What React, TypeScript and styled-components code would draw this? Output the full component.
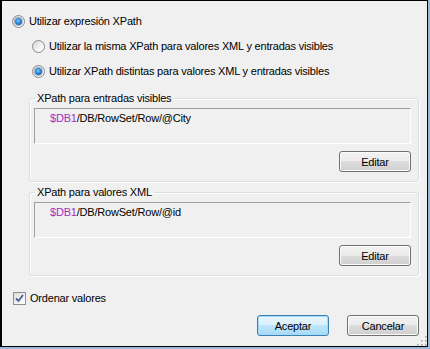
import styled, { createGlobalStyle } from "styled-components";

const Global = createGlobalStyle`
  body {
    margin: 0;
    background: #ffffff;
  }
`;

const Frame = styled.div`
  width: 430px;
  height: 349px;
  box-sizing: border-box;
  border-right: 2px solid #9db9dc;
  border-bottom: 2px solid #9db9dc;
  font-family: "Liberation Sans", Arial, sans-serif;
  font-size: 11px;
  letter-spacing: -0.2px;
  color: #000;
`;

const Dialog = styled.div`
  position: relative;
  height: 100%;
  box-sizing: border-box;
  border: 1px solid #000;
  border-left-width: 2px;
  background: #f0f0f0;
  padding: 12px 8px 0 10px;
  display: flex;
  flex-direction: column;
`;

const Row = styled.label<{ gap?: number }>`
  display: flex;
  align-items: center;
  height: 16px;
  gap: ${(p) => p.gap ?? 4}px;
  white-space: nowrap;
`;

const SubOptions = styled.div`
  display: flex;
  flex-direction: column;
  gap: 9px;
  margin: 9px 0 0 20px;
`;

const RadioRing = styled.span`
  width: 13px;
  height: 13px;
  box-sizing: border-box;
  border-radius: 50%;
  border: 1px solid #8a8a8a;
  background: linear-gradient(135deg, #d6d6d6 0%, #f4f4f4 60%, #ffffff 100%);
  display: flex;
  align-items: center;
  justify-content: center;
  flex-shrink: 0;
`;

const RadioDot = styled.span`
  width: 7px;
  height: 7px;
  border-radius: 50%;
  background: radial-gradient(circle at 45% 40%, #7fd0ff 0%, #2a86d6 45%, #0d3f7c 100%);
  box-shadow: 0 0 0 1px rgba(20, 60, 120, 0.35);
`;

function Radio({ checked }: { checked?: boolean }) {
  return <RadioRing>{checked && <RadioDot />}</RadioRing>;
}

const Group = styled.fieldset<{ top: number }>`
  margin: ${(p) => p.top}px 0 0 17px;
  padding: 3px 7px 9px 4px;
  border: 1px solid #d5dfe5;
  border-radius: 3px;
  box-shadow: inset 1px 1px 0 #ffffff, 1px 1px 0 #ffffff;
  display: flex;
  flex-direction: column;
  align-items: flex-end;
  min-width: 0;
`;

const Legend = styled.legend`
  padding: 0 2px;
  margin-left: 1px;
  line-height: 14px;
`;

const PathBox = styled.div`
  align-self: stretch;
  height: 36px;
  box-sizing: border-box;
  border-top: 1px solid #a0a0a0;
  border-left: 1px solid #a0a0a0;
  border-right: 1px solid #ffffff;
  border-bottom: 1px solid #ffffff;
  padding: 2px 0 0 15px;
  line-height: 14px;
`;

const Var = styled.span`
  color: #a32fc0;
`;

const Button = styled.button<{ primary?: boolean }>`
  width: 72px;
  height: 21px;
  box-sizing: border-box;
  padding: 0;
  font: inherit;
  letter-spacing: inherit;
  color: #000;
  border-radius: 3px;
  border: 1px solid ${(p) => (p.primary ? "#3c7fb1" : "#707070")};
  background: ${(p) =>
    p.primary
      ? "linear-gradient(#eaf6fd 0%, #d9f0fc 50%, #bee6fd 50%, #a7d9f5 100%)"
      : "linear-gradient(#f2f2f2 0%, #ebebeb 50%, #dddddd 50%, #cfcfcf 100%)"};
  box-shadow: inset 0 0 0 1px ${(p) => (p.primary ? "#9fdcf9" : "#fcfcfc")};
`;

const EditButton = styled(Button)`
  margin-top: 7px;
`;

const CheckBox = styled.span`
  width: 13px;
  height: 13px;
  box-sizing: border-box;
  border: 1px solid #8e8f8f;
  background: linear-gradient(135deg, #dcdcdc 0%, #f6f6f6 70%, #ffffff 100%);
  margin-left: 1px;
  display: flex;
  align-items: center;
  justify-content: center;
  flex-shrink: 0;
`;

const Footer = styled.div`
  display: flex;
  justify-content: flex-end;
  gap: 18px;
  margin-top: 9px;
`;

const Grip = styled.svg`
  position: absolute;
  right: 0;
  bottom: 0;
`;

export default function App() {
  return (
    <Frame>
      <Global />
      <Dialog>
        <Row>
          <Radio checked />
          Utilizar expresión XPath
        </Row>
        <SubOptions>
          <Row>
            <Radio />
            Utilizar la misma XPath para valores XML y entradas visibles
          </Row>
          <Row>
            <Radio checked />
            Utilizar XPath distintas para valores XML y entradas visibles
          </Row>
        </SubOptions>
        <Group top={12}>
          <Legend>XPath para entradas visibles</Legend>
          <PathBox>
            <Var>$DB1</Var>/DB/RowSet/Row/@City
          </PathBox>
          <EditButton>Editar</EditButton>
        </Group>
        <Group top={3}>
          <Legend>XPath para valores XML</Legend>
          <PathBox>
            <Var>$DB1</Var>/DB/RowSet/Row/@id
          </PathBox>
          <EditButton>Editar</EditButton>
        </Group>
        <Row style={{ marginTop: 14 }}>
          <CheckBox>
            <svg width="9" height="9" viewBox="0 0 9 9">
              <path d="M1 4.5 L3.5 7 L8 1" fill="none" stroke="#4a5f97" strokeWidth="1.8" />
            </svg>
          </CheckBox>
          Ordenar valores
        </Row>
        <Footer>
          <Button primary>Aceptar</Button>
          <Button>Cancelar</Button>
        </Footer>
        <Grip width="12" height="12" viewBox="0 0 12 12">
          {[
            [10, 2], [10, 6], [10, 10], [6, 6], [6, 10], [2, 10],
          ].map(([x, y]) => (
            <rect key={`${x}-${y}`} x={x} y={y} width="1.5" height="1.5" fill="#a0a0a0" />
          ))}
        </Grip>
      </Dialog>
    </Frame>
  );
}
